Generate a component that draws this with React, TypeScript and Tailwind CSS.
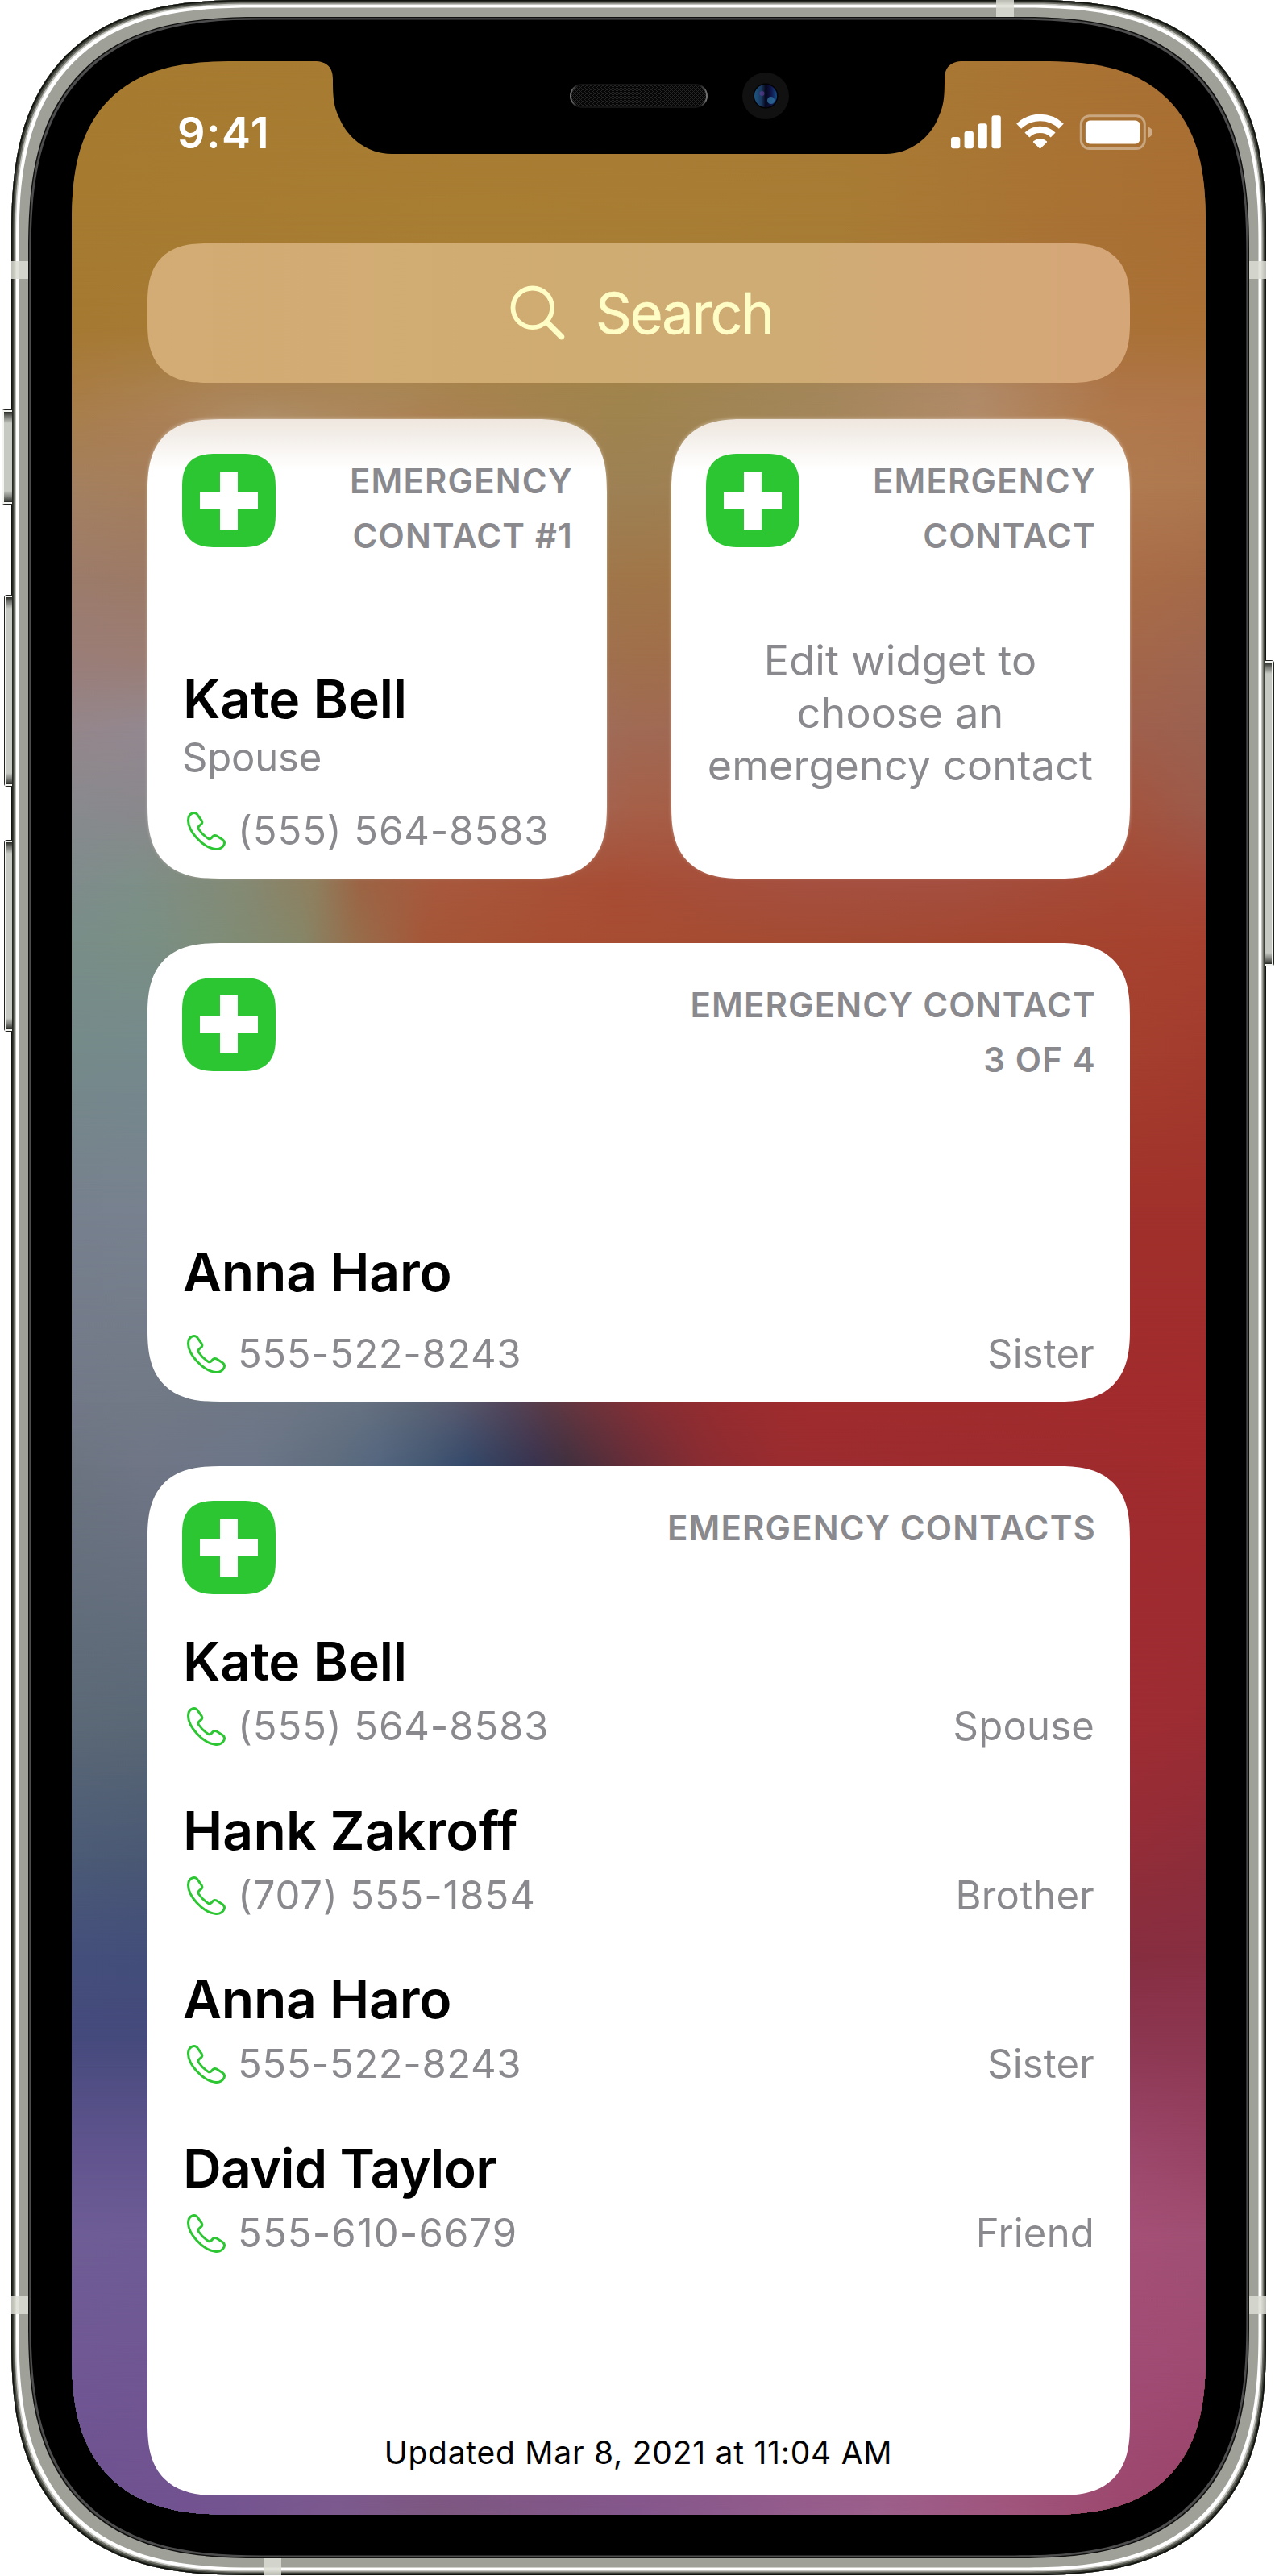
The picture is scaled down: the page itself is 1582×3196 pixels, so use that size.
import React from "react";

/* ---------- Wallpaper ---------- */

type Row = { y: number; stops: [number, string][] };

// Colours of the blurred wallpaper on a coarse mesh (screen coordinates).
const WALLPAPER: Row[] = [
  { y: 0, stops: [[0, "#a67b30"], [500, "#a87c33"], [1000, "#a87a34"], [1200, "#a97433"], [1407, "#a96f33"]] },
  { y: 190, stops: [[0, "#a67b30"], [500, "#a87e33"], [950, "#a87c34"], [1200, "#a97334"], [1407, "#a96e33"]] },
  { y: 330, stops: [[0, "#a67932"], [500, "#a87e38"], [950, "#a67c38"], [1200, "#aa7338"], [1407, "#aa7035"]] },
  { y: 410, stops: [[0, "#a87c44"], [200, "#ab8458"], [400, "#a98656"], [500, "#a7834e"], [680, "#a0844c"], [920, "#a3865a"], [1120, "#b08a68"], [1300, "#ae7548"], [1407, "#ae7547"]] },
  { y: 440, stops: [[0, "#a87e4c"], [110, "#ab8055"], [240, "#ae8d66"], [450, "#ab8152"], [680, "#9f844e"], [920, "#a3865a"], [1120, "#b18b69"], [1270, "#b07a4c"], [1407, "#b0754b"]] },
  { y: 530, stops: [[0, "#a48060"], [94, "#a57e5c"], [700, "#9d8154"], [1313, "#b07a50"], [1407, "#ae784e"]] },
  { y: 640, stops: [[0, "#9c7b6a"], [94, "#9c7a66"], [700, "#a07648"], [1313, "#a96d47"], [1407, "#a56a48"]] },
  { y: 740, stops: [[0, "#9a7d78"], [94, "#9b7d74"], [700, "#a06f4b"], [1313, "#a3664a"], [1407, "#9f6650"]] },
  { y: 830, stops: [[0, "#94868b"], [94, "#938890"], [700, "#a06a54"], [1313, "#9f604c"], [1407, "#9b6150"]] },
  { y: 930, stops: [[0, "#888a8e"], [94, "#8a888c"], [700, "#a65f48"], [1313, "#a3543f"], [1407, "#9c5a4a"]] },
  { y: 1020, stops: [[0, "#7f8c8b"], [81, "#7d8f88"], [211, "#848a74"], [302, "#8f7f5e"], [358, "#9c6444"], [457, "#a8583d"], [674, "#a84d35"], [900, "#a55040"], [1100, "#a54f40"], [1300, "#a54834"], [1407, "#a4483a"]] },
  { y: 1090, stops: [[0, "#798e88"], [100, "#7a8f84"], [180, "#7f8d78"], [285, "#868668"], [350, "#966e4c"], [440, "#a55638"], [600, "#a84e32"], [1000, "#a34a33"], [1200, "#a4452f"], [1407, "#a6412f"]] },
  { y: 1230, stops: [[0, "#758a8a"], [94, "#758a8c"], [1313, "#a53f2e"], [1407, "#a33c2e"]] },
  { y: 1430, stops: [[0, "#77808e"], [94, "#78818f"], [1313, "#a0302b"], [1407, "#a0302b"]] },
  { y: 1664, stops: [[0, "#727887"], [91, "#717986"], [258, "#6e7786"], [358, "#667282"], [424, "#5c6678"], [474, "#585b70"], [541, "#52455a"], [591, "#5a3a46"], [650, "#70333b"], [720, "#872e34"], [820, "#982c2f"], [920, "#a02c2e"], [1407, "#a22b2d"]] },
  { y: 1741, stops: [[0, "#6c7481"], [91, "#707686"], [224, "#6c7688"], [324, "#5f6d7e"], [381, "#54667f"], [441, "#445873"], [491, "#34496a"], [541, "#363c58"], [574, "#393350"], [613, "#40303f"], [690, "#642d38"], [780, "#882c32"], [880, "#9a2c2f"], [1407, "#a12b2d"]] },
  { y: 2070, stops: [[0, "#5b6876"], [94, "#596775"], [1313, "#9e2c33"], [1407, "#9b2c33"]] },
  { y: 2230, stops: [[0, "#4b5a76"], [94, "#4a5874"], [1313, "#922d38"], [1407, "#8d2d3a"]] },
  { y: 2350, stops: [[0, "#444f7b"], [94, "#434e7a"], [1313, "#862e40"], [1407, "#882e42"]] },
  { y: 2450, stops: [[0, "#454a7d"], [94, "#454a7c"], [1313, "#8c3650"], [1407, "#8c3650"]] },
  { y: 2600, stops: [[0, "#62558f"], [94, "#62558f"], [1313, "#9c486c"], [1407, "#984465"]] },
  { y: 2700, stops: [[0, "#6e5d96"], [94, "#6e5c96"], [1313, "#a45076"], [1407, "#a14f74"]] },
  { y: 2850, stops: [[0, "#705894"], [94, "#705793"], [1313, "#a14c74"], [1407, "#9f4b72"]] },
  { y: 3044, stops: [[0, "#6e5090"], [180, "#735390"], [330, "#7c5a8e"], [450, "#7d5880"], [700, "#84578c"], [1000, "#9c608c"], [1170, "#a0557c"], [1300, "#9c486e"], [1407, "#99426a"]] },
];

// Every row starts transparent at the previous row's height and is opaque at its own.
function Wallpaper() {
  return (
    <div className="absolute inset-0">
      {WALLPAPER.map((row, i) => {
        const from = i === 0 ? 0 : WALLPAPER[i - 1].y;
        const mask = i === 0 ? undefined : `linear-gradient(to bottom, transparent 0px, black ${row.y - from}px)`;
        return (
          <div
            key={row.y}
            className="absolute inset-x-0 bottom-0"
            style={{
              top: from,
              background: `linear-gradient(to right, ${row.stops.map(([x, c]) => `${c} ${x}px`).join(", ")})`,
              maskImage: mask,
              WebkitMaskImage: mask,
            }}
          />
        );
      })}
    </div>
  );
}

/* ---------- Hardware ---------- */

function Notch() {
  return (
    <svg className="absolute left-[289px] top-0" width="829" height="116" viewBox="0 0 829 116" aria-hidden="true">
      <defs>
        <pattern id="mesh" width="5" height="5" patternUnits="userSpaceOnUse">
          <rect width="5" height="5" fill="#060606" />
          <path d="M0 0L5 5M5 0L0 5" stroke="#262626" strokeWidth="1" />
        </pattern>
        <linearGradient id="rim" x1="0" x2="1">
          <stop offset="0" stopColor="#777" />
          <stop offset=".05" stopColor="#141414" />
          <stop offset=".95" stopColor="#141414" />
          <stop offset="1" stopColor="#777" />
        </linearGradient>
        <linearGradient id="lens" x1="0" x2="1">
          <stop offset="0" stopColor="#1c5580" />
          <stop offset=".3" stopColor="#1b3a60" />
          <stop offset=".5" stopColor="#05061a" />
          <stop offset=".75" stopColor="#10164a" />
          <stop offset="1" stopColor="#154a86" />
        </linearGradient>
      </defs>
      <path
        d="M0 -1 L12 0 C28 0 35 8 35 22 C35 44 36 55 42 68 C52 95 78 115 108 115 L721 115 C751 115 777 95 787 68 C793 55 794 44 794 22 C794 8 801 0 817 0 L829 -1Z"
        fill="#000"
      />
      <rect x="330" y="29" width="169" height="28" rx="14" fill="url(#mesh)" stroke="url(#rim)" strokeWidth="2" />
      <circle cx="572" cy="43" r="29" fill="#111" />
      <circle cx="572" cy="43" r="15.5" fill="#020204" />
      <circle cx="572" cy="43" r="14" fill="url(#lens)" />
      <circle cx="567.5" cy="40" r="3" fill="#5a3a90" opacity=".7" />
      <circle cx="578.5" cy="48.5" r="4.5" fill="#3583ac" opacity=".65" />
    </svg>
  );
}

function SideButton({ className, side }: { className: string; side: "left" | "right" }) {
  const outer = side === "left" ? "rounded-l-[4px] border-r-0" : "rounded-r-[4px] border-l-0";
  const inner = side === "left" ? "border-r-0" : "border-l-0";
  return (
    <div className={`absolute border-[1.5px] border-[#1f231f] bg-[#c6c8c2] ${outer} ${className}`}>
      <div
        className={`h-full border-2 border-[#f4f5f2] bg-[linear-gradient(to_bottom,#2a2c28_0px,#777974_6px,transparent_14px),linear-gradient(to_top,#2a2c28_0px,#777974_6px,transparent_14px)] ${inner}`}
      />
    </div>
  );
}

function AntennaBand({ className }: { className: string }) {
  return <div className={`absolute bg-[#dcddd4]/85 ${className}`} />;
}

/* ---------- Status bar ---------- */

function StatusBar() {
  return (
    <div className="flex h-[226px] items-start justify-between pl-[131px] pr-[66px]">
      <span className="mt-[59px] text-[54px] font-semibold leading-[60px] tracking-[1.6px] text-white">9:41</span>
      <svg className="mt-[64px]" width="252" height="48" viewBox="0 0 252 48" fill="#fff" aria-label="Signal, Wi-Fi and battery">
        <rect x="2" y="30" width="11.3" height="14.3" rx="3" />
        <rect x="18.6" y="22.7" width="11.3" height="21.6" rx="3" />
        <rect x="35.5" y="13.3" width="11.3" height="31" rx="3" />
        <rect x="52.5" y="3.3" width="11.3" height="41" rx="3" />
        <g fill="none" stroke="#fff">
          <path d="M86.2 16.6 A38 38 0 0 1 138.8 16.6" strokeWidth="8.6" />
          <path d="M96.4 27.4 A23 23 0 0 1 128.6 27.4" strokeWidth="8.4" />
        </g>
        <path d="M104.2 35.2 Q112.5 28.2 120.8 35.2 Q121.6 36 120.8 36.8 L113.3 44 Q112.5 44.8 111.7 44 L104.2 36.8 Q103.4 36 104.2 35.2Z" />
        <rect x="163.3" y="3.8" width="79" height="40.6" rx="10.5" fill="none" stroke="#fff" strokeOpacity=".38" strokeWidth="3" />
        <rect x="168.9" y="9.6" width="67.4" height="28.8" rx="5.5" />
        <path d="M247 17.6 C250.3 19 252 21.3 252 24.2 C252 27 250.3 29.4 247 30.8Z" opacity=".42" />
      </svg>
    </div>
  );
}

/* ---------- Widgets ---------- */

function SearchField() {
  return (
    <div className="flex h-[173px] items-center rounded-[76px] bg-[linear-gradient(to_right,#d3ab74_0%,#cfac72_45%,#cfac74_65%,#d5a878_90%,#d5a678_100%)] pl-[450px] [corner-shape:superellipse(1.4)]">
      <svg width="70" height="70" viewBox="0 0 70 70" fill="none" stroke="#fffdc6" strokeLinecap="round" aria-hidden="true">
        <circle cx="27.8" cy="27.8" r="24.3" strokeWidth="5.8" />
        <path d="M45.6 45.8 L63.6 63.8" strokeWidth="7.2" />
      </svg>
      <span className="ml-[36px] text-[70px] leading-[86px] tracking-[-2.1px] text-[#fffdc6] [-webkit-text-stroke:0.6px_#fffdc6]">Search</span>
    </div>
  );
}

function MedicalIcon() {
  return (
    <div className="flex size-[116px] shrink-0 items-center justify-center rounded-[42px] bg-[#2dc633] [corner-shape:superellipse(1.4)]">
      <svg width="72" height="72" viewBox="0 0 72 72" fill="#fff" aria-hidden="true">
        <path d="M25 0H47V25H72V47H47V72H25V47H0V25H25Z" />
      </svg>
    </div>
  );
}

function PhoneIcon() {
  return (
    <svg
      className="ml-[6px] shrink-0"
      width="48"
      height="48"
      viewBox="0 0 48 48"
      fill="none"
      stroke="#2dc633"
      strokeWidth="3"
      strokeLinejoin="round"
      aria-hidden="true"
    >
      <path d="M9 1.5C11.2 1.5 12.4 2.7 13.4 4.3L18.2 11.2C19.2 12.8 19 14.3 17.8 15.5L15 17.9C13.6 19.2 13.6 20.4 14.6 22C17.6 26.3 21.8 30.4 26.2 33.2C27.6 34.1 28.8 34 30 32.9L32.4 30.4C33.8 29.2 35.2 29.1 36.8 30.1L44.2 34.8C46.6 36.4 47 38.4 46 40.8C44.2 44.8 40.2 46.6 36 46.4C28.6 46 19.2 40.4 12 32.5C5.2 25 1.5 17 1.5 11C1.5 7 3 3.7 6.2 2.2C7.2 1.7 8 1.5 9 1.5Z" />
    </svg>
  );
}

function Card({ className, faded, children }: { className: string; faded?: boolean; children: React.ReactNode }) {
  const fill = faded
    ? "bg-[linear-gradient(to_bottom,#efe7df_0px,#f3eee9_22px,#fbf9f7_46px,#ffffff_64px)] shadow-[0_-1px_4px_0_rgba(240,230,220,0.45)]"
    : "bg-white";
  return (
    <section className={`flex flex-col rounded-[90px] pl-[43px] pr-[44px] [corner-shape:superellipse(1.4)] ${fill} ${className}`}>
      {children}
    </section>
  );
}

function CardHeader({ lines }: { lines: string[] }) {
  return (
    <header className="-mr-[2px] flex shrink-0 justify-between pt-[43px]">
      <MedicalIcon />
      <h2 className="whitespace-nowrap text-right text-[42px] font-semibold leading-[68px] tracking-[1.15px] text-[#8a8a8e]">
        {lines.map((line) => (
          <span key={line} className="block">
            {line}
          </span>
        ))}
      </h2>
    </header>
  );
}

function Name({ children, tracking = "tracking-[-0.2px]" }: { children: React.ReactNode; tracking?: string }) {
  return <h3 className={`ml-px whitespace-nowrap text-[66px] font-semibold leading-[80px] text-black ${tracking}`}>{children}</h3>;
}

function PhoneRow({ number, tracking, relation }: { number: string; tracking: string; relation?: string }) {
  return (
    <div className="flex h-[60px] items-center whitespace-nowrap text-[49px] leading-[60px] text-[#8a8a8e]">
      <PhoneIcon />
      <span className={`ml-[15px] ${tracking}`}>{number}</span>
      {relation && <span className="ml-auto tracking-[0.2px]">{relation}</span>}
    </div>
  );
}

const CONTACTS = [
  { name: "Kate Bell", nameTracking: "tracking-[-0.2px]", number: "(555) 564-8583", tracking: "tracking-[0.9px]", relation: "Spouse" },
  { name: "Hank Zakroff", nameTracking: "tracking-[0.15px]", number: "(707) 555-1854", tracking: "tracking-[0.85px]", relation: "Brother" },
  { name: "Anna Haro", nameTracking: "tracking-[-0.25px]", number: "555-522-8243", tracking: "tracking-[0.55px]", relation: "Sister" },
  { name: "David Taylor", nameTracking: "tracking-[-0.65px]", number: "555-610-6679", tracking: "tracking-[1.1px]", relation: "Friend" },
];

export default function App() {
  return (
    <main className="relative h-[3196px] w-[1582px] overflow-hidden bg-white font-['Inter',sans-serif]">
      <SideButton side="left" className="left-[1.5px] top-[508px] h-[118px] w-[13px]" />
      <SideButton side="left" className="left-[4.5px] top-[738px] h-[238px] w-[10px]" />
      <SideButton side="left" className="left-[4.5px] top-[1042px] h-[238px] w-[10px]" />
      <SideButton side="right" className="left-[1570px] top-[819px] h-[380px] w-[11px]" />

      <div className="ml-[14px] h-[3195px] w-[1557px] rounded-[296px] bg-black p-[75px] pt-[76px] shadow-[inset_0_0_0_1.5px_#11140f,inset_0_0_0_3px_#3c3f37,inset_0_0_0_4.5px_#6f7169,inset_0_0_0_6px_#c4c5bf,inset_0_0_0_9.5px_#ffffff,inset_0_0_0_21px_#9fa098,inset_0_0_0_22.3px_#101010,inset_0_0_0_24.6px_#4d4d4d] [corner-shape:superellipse(1.4)]">
        <div className="relative h-[3044px] w-[1407px] overflow-hidden rounded-[204px] [corner-shape:superellipse(1.4)]">
          <Wallpaper />
          <Notch />
          <div className="relative">
            <StatusBar />
            <div className="flex flex-col px-[94px]">
              <SearchField />
              <div className="mt-[45px] flex justify-between">
                <Card faded className="h-[570px] w-[570px]">
                  <CardHeader lines={["EMERGENCY", "CONTACT #1"]} />
                  <div className="mt-auto pb-[29px]">
                    <Name>Kate Bell</Name>
                    <p className="mt-[3px] text-[49px] leading-[60px] tracking-[-0.2px] text-[#8a8a8e]">Spouse</p>
                    <div className="mt-[31px]">
                      <PhoneRow number="(555) 564-8583" tracking="tracking-[0.9px]" />
                    </div>
                  </div>
                </Card>
                <Card faded className="h-[570px] w-[569px]">
                  <CardHeader lines={["EMERGENCY", "CONTACT"]} />
                  <p className="mt-[88px] whitespace-nowrap text-center text-[52px] leading-[65px] tracking-[0.2px] text-[#8a8a8e]">
                    Edit widget to
                    <br />
                    choose an
                    <br />
                    emergency contact
                  </p>
                </Card>
              </div>
              <Card className="mt-[80px] h-[569px]">
                <CardHeader lines={["EMERGENCY CONTACT", "3 OF 4"]} />
                <div className="mt-auto pb-[29px]">
                  <Name>Anna Haro</Name>
                  <div className="mt-[32px]">
                    <PhoneRow number="555-522-8243" tracking="tracking-[0.55px]" relation="Sister" />
                  </div>
                </div>
              </Card>
              <Card className="mt-[80px] h-[1277px]">
                <CardHeader lines={["EMERGENCY CONTACTS"]} />
                <ul className="mt-[43px] flex flex-col gap-[58.5px]">
                  {CONTACTS.map((c) => (
                    <li key={c.name} className="flex flex-col gap-[11px]">
                      <Name tracking={c.nameTracking}>{c.name}</Name>
                      <PhoneRow number={c.number} tracking={c.tracking} relation={c.relation} />
                    </li>
                  ))}
                </ul>
                <p className="mt-auto pb-[28px] text-center text-[39px] leading-[50px] tracking-[0.75px] text-black">
                  Updated Mar 8, 2021 at 11:04 AM
                </p>
              </Card>
            </div>
          </div>
        </div>
      </div>

      <AntennaBand className="left-[14px] top-[324px] h-[22px] w-[21px]" />
      <AntennaBand className="left-[1550px] top-[324px] h-[22px] w-[21px]" />
      <AntennaBand className="left-[14px] top-[2849px] h-[22px] w-[21px]" />
      <AntennaBand className="left-[1550px] top-[2849px] h-[22px] w-[21px]" />
      <AntennaBand className="left-[1236px] top-0 h-[21px] w-[22px]" />
      <AntennaBand className="left-[327px] top-[3174px] h-[21px] w-[22px]" />
    </main>
  );
}
